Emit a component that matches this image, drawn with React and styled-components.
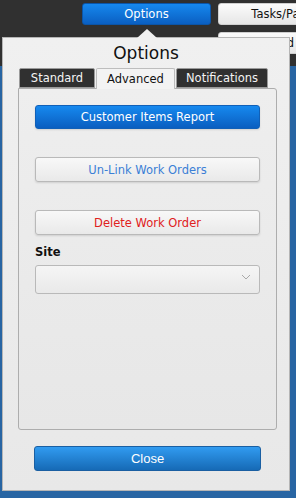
import React, { useState } from "react";
import styled, { createGlobalStyle } from "styled-components";

const GlobalStyle = createGlobalStyle`
  html, body {
    margin: 0;
    padding: 0;
    overflow: hidden;
  }
  body {
    font-family: "DejaVu Sans", Verdana, sans-serif;
  }
`;

const tabs = ["Standard", "Advanced", "Notifications"];
const tabWidths = { Standard: 76, Advanced: 79, Notifications: 92 };

const App = () => {
  const [active, setActive] = useState("Advanced");

  return (
    <Page>
      <GlobalStyle />
      <Header>
        <TopButton $primary>Options</TopButton>
        <TopStack>
          <TopButton $width={130}>Tasks/Parts</TopButton>
          <TopButton $width={130} $align="flex-end">Add</TopButton>
        </TopStack>
      </Header>
      <Body />

      <Popover>
        <Title>Options</Title>
        <TabRow>
          {tabs.map((t) => (
            <Tab
              key={t}
              $active={t === active}
              $width={tabWidths[t]}
              onClick={() => setActive(t)}
            >
              {t}
            </Tab>
          ))}
        </TabRow>
        <Panel>
          <ActionButton $variant="primary">Customer Items Report</ActionButton>
          <ActionButton $color="#3b7fd6">Un-Link Work Orders</ActionButton>
          <ActionButton $color="#e0201c">Delete Work Order</ActionButton>
          <Label>Site</Label>
          <SelectBox>
            <Chevron width="10" height="6" viewBox="0 0 10 6">
              <path d="M1 1 L5 5 L9 1" fill="none" stroke="#a9a9a9" strokeWidth="1" />
            </Chevron>
          </SelectBox>
        </Panel>
        <CloseButton>Close</CloseButton>
      </Popover>
    </Page>
  );
};

export default App;

// Styled Components
const Page = styled.div`
  position: relative;
  width: 296px;
  height: 498px;
  display: flex;
  flex-direction: column;
  overflow: hidden;
`;

const Header = styled.div`
  height: 66px;
  background: #303030;
  display: flex;
  align-items: flex-start;
  gap: 7px;
  padding: 3px 0 0 82px;
  box-sizing: border-box;
`;

const TopStack = styled.div`
  display: flex;
  flex-direction: column;
  gap: 7px;
`;

const TopButton = styled.div`
  width: ${(p) => (p.$width ? `${p.$width}px` : "129px")};
  flex-shrink: 0;
  height: 22px;
  box-sizing: border-box;
  border-radius: 3px;
  display: flex;
  align-items: center;
  justify-content: center;
  font-size: 11.5px;
  white-space: nowrap;
  color: ${(p) => (p.$primary ? "#fff" : "#111")};
  background: ${(p) =>
    p.$primary
      ? "linear-gradient(#1688ee, #0a5fc2)"
      : "linear-gradient(#fbfbfb, #e6e6e6)"};
  border: 1px solid ${(p) => (p.$primary ? "#0b55a8" : "#cfcfcf")};
`;

const Body = styled.div`
  flex: 1;
  background: #2865a3;
`;

const Popover = styled.div`
  position: absolute;
  left: 2px;
  top: 37px;
  width: 288px;
  height: 454px;
  box-sizing: border-box;
  border: 1px solid #b5b5b5;
  background: linear-gradient(#f0f0f0, #e8e8e8);
  padding: 0 12px 0 15px;
  display: flex;
  flex-direction: column;

  &::before {
    content: "";
    position: absolute;
    top: -9px;
    left: 134px;
    border-left: 10px solid transparent;
    border-right: 10px solid transparent;
    border-bottom: 9px solid #f0f0f0;
  }
`;

const Title = styled.div`
  height: 30px;
  line-height: 30px;
  text-align: center;
  font-size: 17px;
  color: #111;
  padding-right: 3px;
`;

const TabRow = styled.div`
  display: flex;
  gap: 1px;
  padding-left: 1px;
  height: 21px;
`;

const Tab = styled.div`
  width: ${(p) => p.$width}px;
  height: ${(p) => (p.$active ? "21px" : "20px")};
  box-sizing: border-box;
  display: flex;
  align-items: center;
  justify-content: center;
  font-size: 11.5px;
  border-radius: 2px 2px 0 0;
  cursor: pointer;
  color: ${(p) => (p.$active ? "#111" : "#f4f4f4")};
  background: ${(p) => (p.$active ? "#f3f3f3" : "#303030")};
  border: 1px solid ${(p) => (p.$active ? "#bdbdbd" : "#9a9a9a")};
  border-bottom: ${(p) => (p.$active ? "none" : "1px solid #9a9a9a")};
  position: relative;
  z-index: 1;
`;

const Panel = styled.div`
  height: 342px;
  box-sizing: border-box;
  margin-top: -1px;
  border: 1px solid #adadad;
  border-radius: 0 3px 3px 3px;
  background: linear-gradient(#eeeeee, #e7e7e7);
  padding: 16px 16px 0 16px;
  display: flex;
  flex-direction: column;
`;

const ActionButton = styled.div`
  height: 24px;
  box-sizing: border-box;
  display: flex;
  align-items: center;
  justify-content: center;
  border-radius: 3px;
  font-size: 11.5px;
  margin-bottom: 28px;
  color: ${(p) => (p.$variant === "primary" ? "#fff" : p.$color)};
  background: ${(p) =>
    p.$variant === "primary"
      ? "linear-gradient(#1689ef, #0a5ec0)"
      : "linear-gradient(#f8f8f8, #e9e9e9)"};
  border: 1px solid ${(p) => (p.$variant === "primary" ? "#1060b8" : "#b9b9b9")};
  box-shadow: 0 1px 2px rgba(0, 0, 0, 0.12);

  & + & {
    height: 25px;
  }
`;

const Label = styled.div`
  margin-top: -21px;
  font-size: 11.5px;
  font-weight: bold;
  color: #111;
  height: 20px;
  line-height: 20px;
`;

const SelectBox = styled.div`
  margin-top: 3px;
  height: 29px;
  box-sizing: border-box;
  border: 1px solid #b9b9b9;
  border-radius: 3px;
  background: linear-gradient(#f5f5f5, #e9e9e9);
  display: flex;
  align-items: center;
  justify-content: flex-end;
  padding: 0 8px 6px 0;
`;

const Chevron = styled.svg`
  display: block;
`;

const CloseButton = styled.div`
  margin: 16px 16px 0 16px;
  height: 25px;
  box-sizing: border-box;
  border-radius: 3px;
  display: flex;
  align-items: center;
  justify-content: center;
  font-family: "Liberation Sans", Arial, sans-serif;
  font-size: 13px;
  color: #fff;
  background: linear-gradient(#319bf0, #166ab6);
  border: 1px solid #1a5fa2;
`;
